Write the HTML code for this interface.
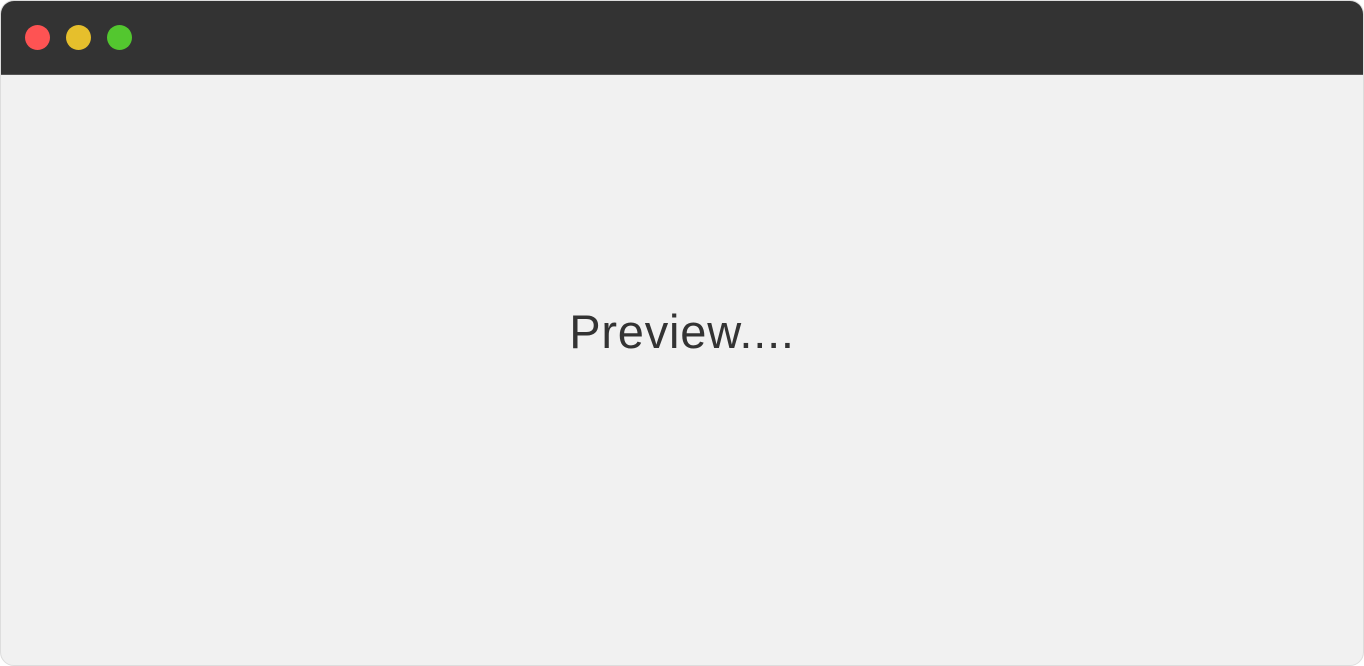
<!DOCTYPE html>
<html><head><style>
html,body{margin:0;padding:0;background:#fff;}
.win{position:absolute;left:0;top:0;width:1362px;height:664px;border:1px solid #ddd;border-radius:14px;background:#f1f1f1;overflow:hidden;}
.bar{position:absolute;left:0;top:0;width:100%;height:73px;background:#333;border-bottom:1px solid #555;}
.d{position:absolute;top:24px;width:25px;height:25px;border-radius:50%;}
.t{position:absolute;left:0;width:100%;top:299px;text-align:center;font:47px "Liberation Sans",sans-serif;color:#333;line-height:64px;letter-spacing:0.8px;}
</style></head><body>
<div class="win">
<div class="bar">
<div class="d" style="left:24px;background:#fe5353"></div>
<div class="d" style="left:65px;background:#e6bf2c"></div>
<div class="d" style="left:106px;background:#53c72f"></div>
</div>
<div class="t">Preview....</div>
</div>
</body></html>
